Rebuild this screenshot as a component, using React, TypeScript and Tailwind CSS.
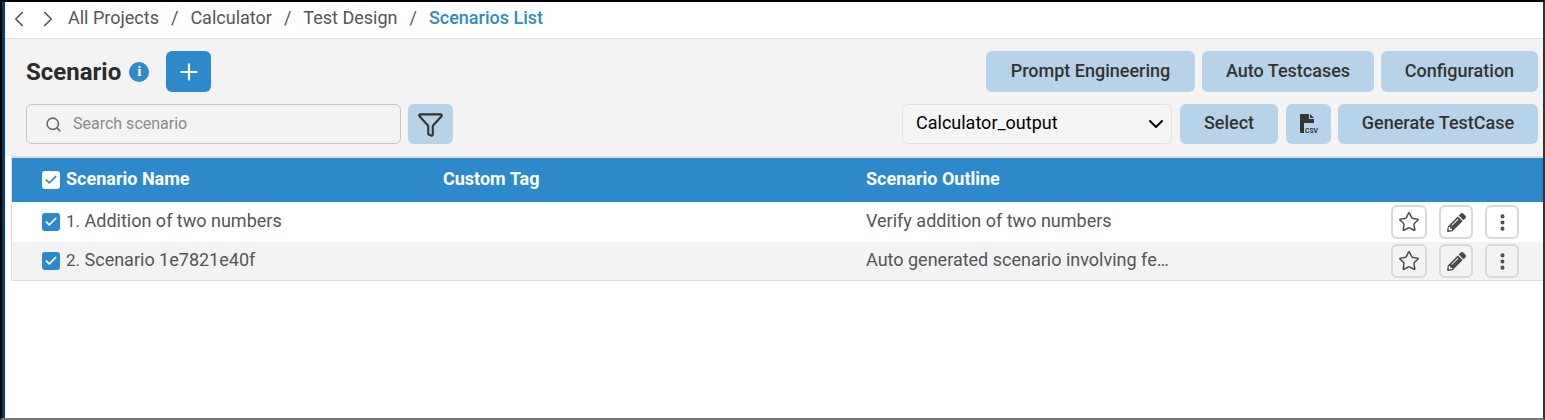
import { ChevronDown, ChevronLeft, ChevronRight, Check, EllipsisVertical, Funnel, Plus, Search, Star } from "lucide-react"
import { FaPencilAlt } from "react-icons/fa"

function Tick({ white }: { white?: boolean }) {
    return (
        <span className={`flex h-[18px] w-[18px] items-center justify-center rounded-[3px] ${white ? "bg-white text-[#2e89cb]" : "bg-[#2e89cb] text-white"}`}>
            <Check size={14} strokeWidth={3} />
        </span>
    )
}

function ActionBtn({ children, w }: { children: React.ReactNode; w: string }) {
    return <button className={`flex h-[34px] ${w} items-center justify-center rounded-md border-2 border-[#d9d9d9] text-[#4a4a4a]`}>{children}</button>
}

function Actions() {
    return (
        <div className="ml-auto mr-[24px] flex gap-[12px]">
            <ActionBtn w="w-[36px]"><Star size={22} strokeWidth={1.6} /></ActionBtn>
            <ActionBtn w="w-[34px]"><FaPencilAlt size={19} /></ActionBtn>
            <ActionBtn w="w-[34px]"><EllipsisVertical size={21} strokeWidth={2.6} /></ActionBtn>
        </div>
    )
}

function SoftBtn({ children, w, className = "" }: { children: React.ReactNode; w: string; className?: string }) {
    return <button className={`flex items-center justify-center rounded-md bg-[#b7d3e9] text-[18px] font-medium text-[#333] ${w} ${className}`}>{children}</button>
}

function Row({ no, name, outline, alt }: { no: number; name: string; outline: string; alt?: boolean }) {
    return (
        <div className={`flex items-center ${alt ? "h-[38px] bg-[#f3f3f3]" : "h-[40px] bg-white"}`}>
            <div className="ml-[30px] flex w-[824px] items-center gap-[6px]">
                <Tick />
                <span className="pb-[3px] text-[18px] text-[#555]"><span className="text-[17px]">{no}.</span> {name}</span>
            </div>
            <span className="pb-[3px] text-[18px] text-[#555]">{outline}</span>
            <Actions />
        </div>
    )
}

export default function App() {
    return (
        <div className="h-[420px] overflow-hidden border-t-2 border-r-2 border-b-2 border-l-2 border-t-black border-r-[#333] border-b-[#777] border-l-black bg-white font-['Roboto',sans-serif]">
            <div className="h-full border-l-[3px] border-[#063a6b]">
                <div className="flex h-[37px] items-center border-b border-[#dedede] pb-[3px] text-[18px] text-[#555]">
                    <ChevronLeft size={26} strokeWidth={1.5} className="ml-px" />
                    <ChevronRight size={26} strokeWidth={1.5} className="ml-[3px]" />
                    <div className="flex pb-[3px]">
                        <span className="ml-[7px]">All Projects</span>
                        <span className="mx-[12px]">/</span>
                        <span>Calculator</span>
                        <span className="mx-[12px]">/</span>
                        <span>Test Design</span>
                        <span className="mx-[12px]">/</span>
                        <span className="font-medium text-[#2e89cb]">Scenarios List</span>
                    </div>
                </div>

                <div className="h-[117px] bg-[#f3f3f3] pl-[21px] pr-[5px] pt-[12px]">
                    <div className="flex h-[41px] items-center">
                        <span className="text-[24px] font-bold text-[#2b2b2b]">Scenario</span>
                        <span className="ml-[8px] flex h-[20px] w-[20px] items-center justify-center rounded-full bg-[#2e89cb] font-['Liberation_Serif',serif] text-[15px] font-bold text-white">i</span>
                        <button className="ml-[17px] flex h-[41px] w-[45px] items-center justify-center rounded-md bg-[#2e89cb] text-white"><Plus size={26} strokeWidth={2} /></button>
                        <div className="ml-auto flex h-[41px] gap-[7px]">
                            <SoftBtn w="w-[209px]" className="pb-[2px]">Prompt Engineering</SoftBtn>
                            <SoftBtn w="w-[172px]" className="pb-[2px]">Auto Testcases</SoftBtn>
                            <SoftBtn w="w-[157px]" className="pb-[2px]">Configuration</SoftBtn>
                        </div>
                    </div>
                    <div className="mt-[12px] flex h-[40px]">
                        <div className="flex w-[375px] items-center rounded-md border border-[#c4c4c4] pl-[18px] text-[#8a8a8a]">
                            <Search size={17} strokeWidth={2.2} className="text-[#666]" />
                            <span className="ml-[11px] text-[16px]">Search scenario</span>
                        </div>
                        <button className="ml-[7px] flex w-[45px] items-center justify-center rounded-md bg-[#b7d3e9] text-[#333]"><Funnel size={27} strokeWidth={1.9} /></button>
                        <div className="ml-auto flex gap-[7px]">
                            <div className="mr-px flex w-[270px] items-center justify-between rounded-md border border-[#e2e2e2] bg-[#f5f5f5] pl-[13px] pr-[3px] text-[18px] text-black">
                                <span className="pb-[3px]">Calculator_output</span>
                                <ChevronDown size={24} strokeWidth={2} />
                            </div>
                            <SoftBtn w="w-[98px]" className="mr-px pb-[4px]">Select</SoftBtn>
                            <button className="flex w-[45px] items-center justify-center rounded-md bg-[#b7d3e9]">
                                <svg width="20" height="22" viewBox="0 0 20 22">
                                    <path d="M2 1h8v5h5v4H5v10H2a1 1 0 0 1-1-1V2a1 1 0 0 1 1-1z" fill="#333" />
                                    <path d="M11 1l4 4h-4z" fill="#333" />
                                    <text x="6" y="19.500" fontSize="8" fontWeight="700" textLength="13" lengthAdjust="spacingAndGlyphs" fill="#333" fontFamily="Roboto">CSV</text>
                                </svg>
                            </button>
                            <SoftBtn w="w-[200px]" className="pb-[4px]">Generate TestCase</SoftBtn>
                        </div>
                    </div>
                </div>

                <div className="ml-[6px] border-t-2 border-l border-[#dcdcdc]">
                    <div className="flex h-[44px] items-center bg-[#2e89cb] text-[18px] font-bold text-white">
                        <div className="ml-[30px] flex w-[401px] items-center gap-[6px]">
                            <Tick white />
                            <span className="pb-[3px]">Scenario Name</span>
                        </div>
                        <span className="w-[423px] pb-[3px]">Custom Tag</span>
                        <span className="pb-[3px]">Scenario Outline</span>
                    </div>
                    <Row no={1} name="Addition of two numbers" outline="Verify addition of two numbers" />
                    <Row no={2} name="Scenario 1e7821e40f" outline="Auto generated scenario involving fe…" alt />
                    <div className="h-px bg-[#dcdcdc]" />
                </div>
            </div>
        </div>
    )
}
